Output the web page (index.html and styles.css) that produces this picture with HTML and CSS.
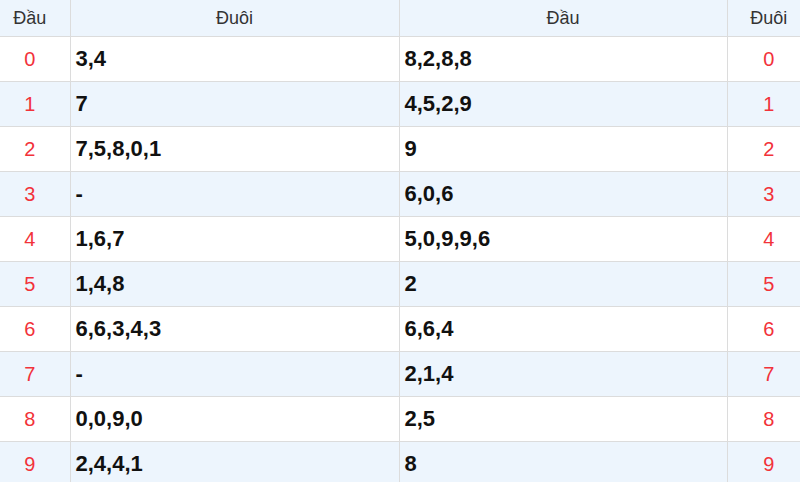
FILE: index.html
```html
<!DOCTYPE html>
<html lang="vi">
<head>
<meta charset="utf-8">
<link rel="stylesheet" href="styles.css">
</head>
<body>
<table class="loto">
  <colgroup>
    <col class="c-first"><col class="c-mid"><col class="c-mid2"><col class="c-last">
  </colgroup>
  <thead>
    <tr><th>Đầu</th><th>Đuôi</th><th>Đầu</th><th>Đuôi</th></tr>
  </thead>
  <tbody>
    <tr><td class="num">0</td><td class="val">3,4</td><td class="val">8,2,8,8</td><td class="num">0</td></tr>
    <tr><td class="num">1</td><td class="val">7</td><td class="val">4,5,2,9</td><td class="num">1</td></tr>
    <tr><td class="num">2</td><td class="val">7,5,8,0,1</td><td class="val">9</td><td class="num">2</td></tr>
    <tr><td class="num">3</td><td class="val">-</td><td class="val">6,0,6</td><td class="num">3</td></tr>
    <tr><td class="num">4</td><td class="val">1,6,7</td><td class="val">5,0,9,9,6</td><td class="num">4</td></tr>
    <tr><td class="num">5</td><td class="val">1,4,8</td><td class="val">2</td><td class="num">5</td></tr>
    <tr><td class="num">6</td><td class="val">6,6,3,4,3</td><td class="val">6,6,4</td><td class="num">6</td></tr>
    <tr><td class="num">7</td><td class="val">-</td><td class="val">2,1,4</td><td class="num">7</td></tr>
    <tr><td class="num">8</td><td class="val">0,0,9,0</td><td class="val">2,5</td><td class="num">8</td></tr>
    <tr><td class="num">9</td><td class="val">2,4,4,1</td><td class="val">8</td><td class="num">9</td></tr>
  </tbody>
</table>
</body>
</html>
```

FILE: styles.css
```css
html, body {
  margin: 0;
  padding: 0;
  background: #ffffff;
  overflow: hidden;
}
body {
  font-family: "Liberation Sans", Arial, sans-serif;
}
.loto {
  width: 820px;
  margin-left: -10px;
  border-collapse: collapse;
  table-layout: fixed;
}
.c-first { width: 80px; }
.c-mid { width: 329px; }
.c-mid2 { width: 328px; }
.c-last { width: 83px; }
.loto th,
.loto td {
  border: 1px solid #dcdcdc;
  padding: 0 5px;
}
.loto tr > :first-child { border-left: none; }
.loto tr > :last-child { border-right: none; }
.loto thead th {
  height: 36px;
  border-top: none;
  background: #edf5fd;
  color: #333333;
  font-size: 18px;
  font-weight: normal;
  text-align: center;
  padding: 0;
}
.loto tbody td {
  height: 44px;
  padding-top: 0;
  padding-bottom: 0;
}
.loto tbody tr:nth-child(even) td {
  background: #edf5fd;
}
.num {
  text-align: center;
  color: #f2323a;
  font-size: 20px;
}
.val {
  color: #111111;
  font-size: 22px;
  font-weight: bold;
  text-align: left;
}
```
